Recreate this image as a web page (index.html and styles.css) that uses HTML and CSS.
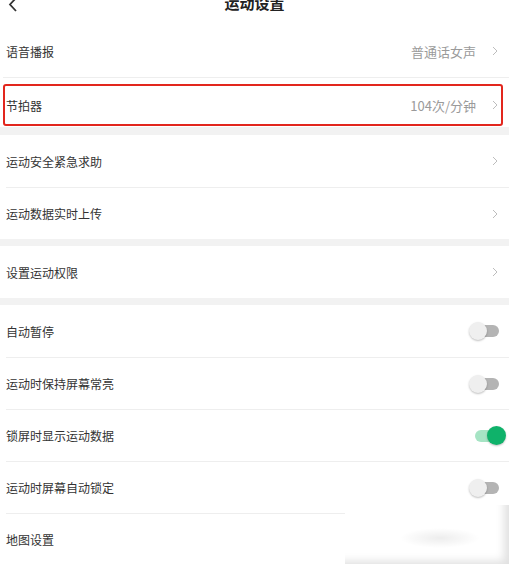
FILE: index.html
```html
<!DOCTYPE html>
<html lang="zh-CN">
<head>
    <meta charset="UTF-8">
    <meta name="viewport" content="width=device-width, initial-scale=1.0">
    <title>运动设置</title>
    <link rel="stylesheet" href="styles.css">
</head>
<body>
    <div class="page">
        <header class="topbar">
            <svg class="back" width="10" height="14" viewBox="0 0 10 14">
                <polyline points="8,-2 2,4.5 8,11" fill="none" stroke="#333" stroke-width="1.8"/>
            </svg>
            <h1>运动设置</h1>
        </header>

        <div class="group">
            <div class="row">
                <span class="label">语音播报</span>
                <span class="value">普通话女声</span>
                <svg class="arrow" width="6" height="10" viewBox="0 0 6 10"><polyline points="1,1 5,5 1,9" fill="none" stroke="#bdbdbd" stroke-width="1"/></svg>
            </div>
            <div class="row row-mark">
                <div class="mark">
                    <span class="label">节拍器</span>
                    <span class="value">104次/分钟</span>
                    <svg class="arrow" width="6" height="10" viewBox="0 0 6 10"><polyline points="1,1 5,5 1,9" fill="none" stroke="#bdbdbd" stroke-width="1"/></svg>
                </div>
            </div>
        </div>

        <div class="gap gap-8"></div>

        <div class="group">
            <div class="row">
                <span class="label">运动安全紧急求助</span>
                <svg class="arrow" width="6" height="10" viewBox="0 0 6 10"><polyline points="1,1 5,5 1,9" fill="none" stroke="#bdbdbd" stroke-width="1"/></svg>
            </div>
            <div class="row">
                <span class="label">运动数据实时上传</span>
                <svg class="arrow" width="6" height="10" viewBox="0 0 6 10"><polyline points="1,1 5,5 1,9" fill="none" stroke="#bdbdbd" stroke-width="1"/></svg>
            </div>
        </div>

        <div class="gap"></div>

        <div class="group">
            <div class="row">
                <span class="label">设置运动权限</span>
                <svg class="arrow" width="6" height="10" viewBox="0 0 6 10"><polyline points="1,1 5,5 1,9" fill="none" stroke="#bdbdbd" stroke-width="1"/></svg>
            </div>
        </div>

        <div class="gap"></div>

        <div class="group">
            <div class="row">
                <span class="label">自动暂停</span>
                <span class="switch"><i class="track"></i><i class="knob"></i></span>
            </div>
            <div class="row">
                <span class="label">运动时保持屏幕常亮</span>
                <span class="switch"><i class="track"></i><i class="knob"></i></span>
            </div>
            <div class="row">
                <span class="label">锁屏时显示运动数据</span>
                <span class="switch on"><i class="track"></i><i class="knob"></i></span>
            </div>
            <div class="row">
                <span class="label">运动时屏幕自动锁定</span>
                <span class="switch"><i class="track"></i><i class="knob"></i></span>
            </div>
            <div class="row">
                <span class="label">地图设置</span>
            </div>
        </div>

        <!-- 右下角水印遮挡 -->
        <div class="watermark"></div>
    </div>
</body>
</html>
```

FILE: styles.css
```css
body {
    margin: 0;
    background-color: #fff;
    font-family: 'Noto Sans CJK SC', 'Noto Sans', sans-serif;
    color: #333;
}
.page {
    position: relative;
    width: 509px;
    height: 564px;
    overflow: hidden;
}
.topbar {
    height: 25px;
    display: flex;
    justify-content: center;
    align-items: flex-start;
}
.topbar h1 {
    margin: 0;
    font-size: 15px;
    line-height: 8px;
    font-weight: bold;
    color: #222;
    transform: translateY(-1px);
}
.back {
    position: absolute;
    left: 8px;
    top: 0;
}
.group {
    background: #fff;
}
.gap {
    height: 7px;
    background-color: #f2f2f2;
}
.gap-8 {
    height: 8px;
}
.row {
    box-sizing: border-box;
    height: 52px;
    margin-left: 6px;
    padding-right: 11px;
    display: flex;
    align-items: center;
}
.row + .row {
    border-top: 1px solid #eeeeee;
}
.row-mark {
    height: 50px;
    margin-left: 3px;
    padding-right: 6px;
}
.mark {
    box-sizing: border-box;
    flex: 1;
    height: 42px;
    margin-top: 5px;
    padding: 0 3px 0 1px;
    border: 2px solid #e2261d;
    border-radius: 3px;
    display: flex;
    align-items: center;
}
.label {
    flex: 1;
    font-size: 12px;
    color: #333;
}
.value {
    font-size: 13px;
    color: #9a9a9a;
    margin-right: 16px;
}
.arrow {
    display: block;
}
.switch {
    position: relative;
    width: 37px;
    height: 20px;
    margin-right: -8px;
}
.switch .track {
    position: absolute;
    left: 3px;
    right: 7px;
    top: 4px;
    height: 12px;
    border-radius: 6px;
    background-color: #b4b4b4;
}
.switch .knob {
    position: absolute;
    left: 0;
    top: 1px;
    width: 18px;
    height: 18px;
    border-radius: 50%;
    background-color: #efefef;
    box-shadow: 0 1px 2px rgba(0,0,0,0.25);
}
.switch.on .track {
    left: 6px;
    right: 6px;
    background-color: #a6e4c4;
}
.switch.on .knob {
    left: auto;
    right: 0;
    width: 19px;
    height: 19px;
    top: 0;
    background-color: #0fb26a;
}
.watermark {
    position: absolute;
    left: 345px;
    top: 505px;
    width: 164px;
    height: 59px;
    background: radial-gradient(ellipse 40px 10px at 95px 33px, rgba(0,0,0,0.07), rgba(0,0,0,0) 100%), #fff;
    box-shadow: inset -8px -6px 8px -3px rgba(0,0,0,0.12);
}
```
